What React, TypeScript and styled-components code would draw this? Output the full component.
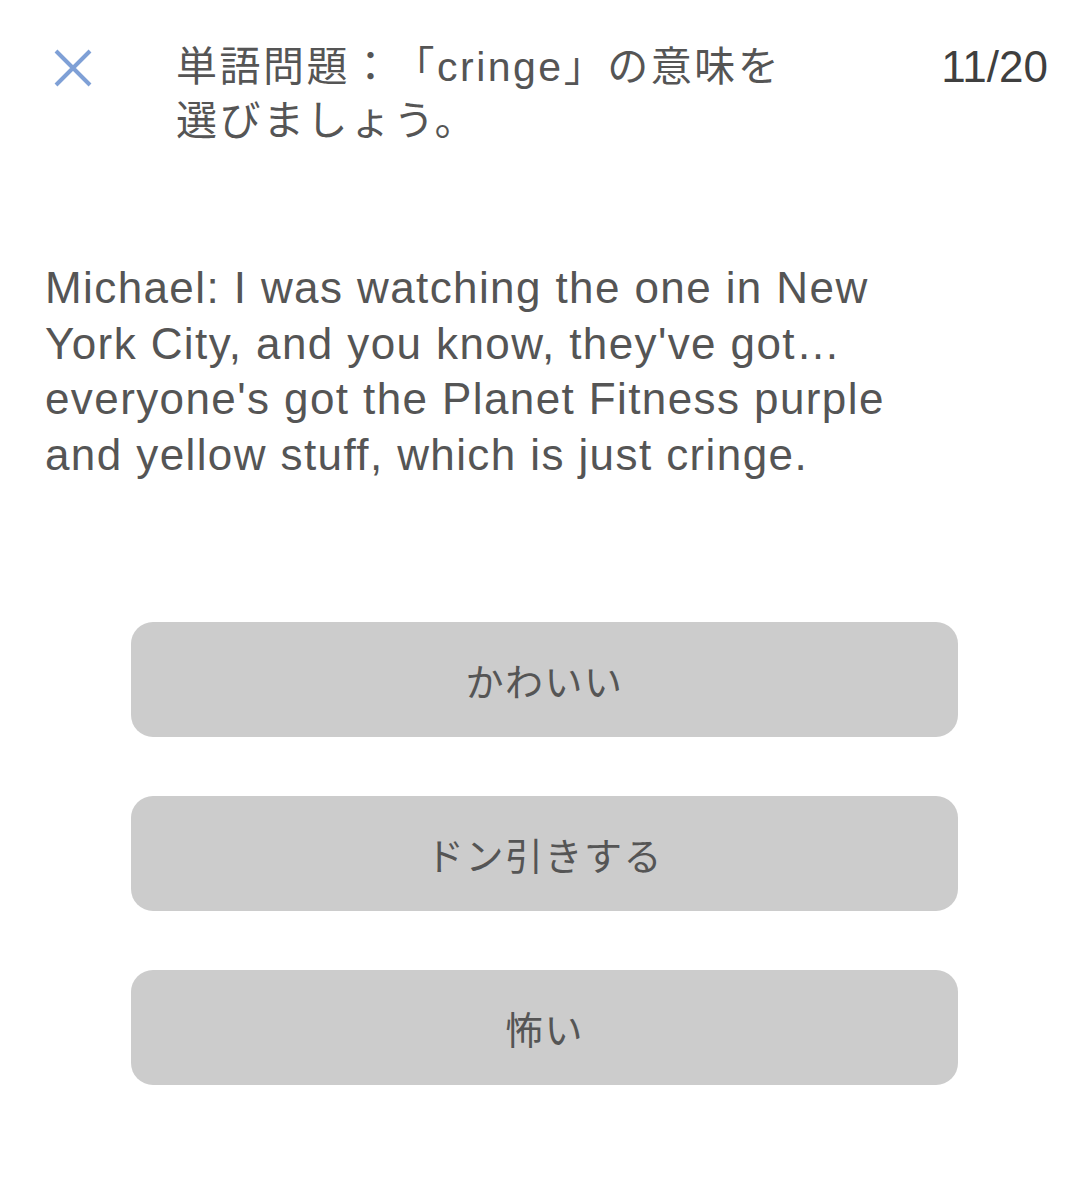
import styled, { createGlobalStyle } from 'styled-components';

const GlobalStyle = createGlobalStyle`
	html, body {
		margin: 0;
		padding: 0;
		background: #ffffff;
	}
	body {
		font-family: 'Liberation Sans', 'Noto Sans CJK JP', sans-serif;
		color: #555555;
	}
`;

const Page = styled.main`
	width: 1090px;
	height: 1200px;
	box-sizing: border-box;
	padding: 40px 42px 0 45px;
`;

const Header = styled.header`
	display: flex;
	align-items: flex-start;
`;

const CloseButton = styled.button`
	width: 131px;
	flex: none;
	display: flex;
	align-items: center;
	padding: 9px 0 0 9px;
	margin: 0;
	background: none;
	border: 0;
	cursor: pointer;
`;

const Title = styled.h1`
	flex: 1;
	margin: 0;
	font-size: 41px;
	font-weight: 400;
	letter-spacing: 2.5px;
	line-height: 54px;
	color: #555555;
	max-width: 630px;
	text-spacing-trim: space-all;
`;

const Counter = styled.div`
	margin-left: auto;
	font-size: 44px;
	line-height: 54px;
	color: #3f3f3f;
`;

const Passage = styled.p`
	margin: 112px 0 0;
	font-size: 44px;
	letter-spacing: 1.4px;
	line-height: 55.5px;
	color: #555555;
	max-width: 880px;
`;

const Choices = styled.div`
	display: flex;
	flex-direction: column;
	gap: 59px;
	margin: 140px 0 0 86px;
	width: 827px;
`;

const Choice = styled.button`
	height: 115px;
	border: 0;
	border-radius: 22px;
	background: #cccccc;
	color: #555555;
	font-family: 'Noto Sans CJK JP', sans-serif;
	font-size: 38px;
	font-weight: 400;
	letter-spacing: 1.5px;
	cursor: pointer;
`;

const choices = ['かわいい', 'ドン引きする', '怖い'];

function App() {
	return (
		<>
			<GlobalStyle />
			<Page>
				<Header>
					<CloseButton aria-label="close">
						<svg width="38" height="38" viewBox="0 0 38 38">
							<path d="M2 2 L36 36 M36 2 L2 36" stroke="#7fa0d6" strokeWidth="4" strokeLinecap="butt" />
						</svg>
					</CloseButton>
					<Title>単語問題：「cringe」の意味を選びましょう。</Title>
					<Counter>11/20</Counter>
				</Header>
				<Passage>
					Michael: I was watching the one in New York City, and you know, they've got…
					everyone's got the Planet Fitness purple and yellow stuff, which is just cringe.
				</Passage>
				<Choices>
					{choices.map((c) => (
						<Choice key={c}>{c}</Choice>
					))}
				</Choices>
			</Page>
		</>
	);
}

export default App;
